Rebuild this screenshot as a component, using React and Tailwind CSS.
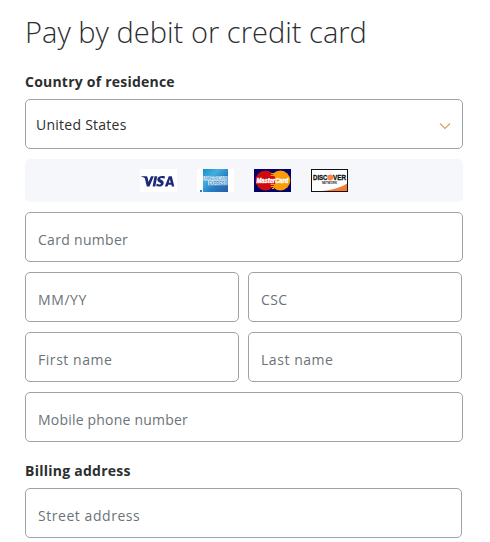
const inputBase =
  "h-[50px] w-full min-w-0 rounded-[5px] border border-[#9da3a6] bg-white px-3 pt-1 text-[14px] text-[#6c7378] placeholder:text-[#6c7378] placeholder:opacity-100 outline-none";

function Field({ label, className = "tracking-[0.4px]" }) {
  return (
    <input
      type="text"
      placeholder={label}
      aria-label={label}
      className={`${inputBase} ${className}`}
    />
  );
}

function Visa() {
  return (
    <svg width="37" height="23" viewBox="0 0 37 23">
      <rect width="37" height="23" fill="#fff" />
      <g fill="#1c2878">
        <path d="M1 7.200h5.200q1.100 0 1.300 1l1 4.800L11 7.200h2.800L9.500 17.500H6.800L4.900 9.300Q3.500 8 1 7.600z" />
        <path d="M14.500 7.200h2.700L15.300 17.500h-2.700z" />
        <path d="M25 7.400 24.600 9.600C22 8.600 20.200 8.800 20.200 9.800C20.200 10.900 24 11.200 23.700 14.200c-.3 3.200-4.300 3.900-7.500 2.900l.4-2.300c2.200 1 4.200.9 4.300 0 .200-1.300-3.800-1.500-3.600-4.500.2-3 4.400-3.900 7.700-2.900z" />
        <path fillRule="evenodd" d="M28.800 7.200h3L34.300 17.500h-2.500l-.3-1.700h-3.300l-.7 1.700h-2.700zm1.100 2.900-1.100 3.700h1.900z" />
      </g>
    </svg>
  );
}

function Amex() {
  return (
    <svg width="37" height="23" viewBox="0 0 37 23" fontFamily="Liberation Sans, sans-serif" fontWeight="700">
      <defs>
        <linearGradient id="amexBlue" x1="0" y1="0" x2="1" y2="1">
          <stop offset="0" stopColor="#168fcb" />
          <stop offset=".32" stopColor="#45aede" />
          <stop offset=".62" stopColor="#267dc2" />
          <stop offset="1" stopColor="#2a5da9" />
        </linearGradient>
      </defs>
      <rect width="37" height="23" fill="#fff" />
      <rect x="6" width="25" height="23" fill="url(#amexBlue)" />
      <rect x="6.500" y="7" width="24" height="4.500" fill="#fff" fillOpacity=".8" />
      <rect x="11" y="11.500" width="19.500" height="4.700" fill="#fff" fillOpacity=".8" />
      <text x="7" y="11" fontSize="4.600" textLength="23" lengthAdjust="spacingAndGlyphs" fill="#5fa8d6">AMERICAN</text>
      <text x="11.500" y="15.700" fontSize="4.600" textLength="18.500" lengthAdjust="spacingAndGlyphs" fill="#4f93cb">EXPRESS</text>
      <rect x="3" y="21" width="2" height="2" fill="#2384c6" />
    </svg>
  );
}

function MasterCard() {
  return (
    <svg width="37" height="23" viewBox="0 0 37 23" fontFamily="Liberation Sans, sans-serif" fontWeight="700" fontStyle="italic">
      <rect width="37" height="23" fill="#02026b" />
      <circle cx="26.300" cy="11.500" r="10" fill="#fb9b06" />
      <circle cx="11.500" cy="11.500" r="10" fill="#cf0a0e" />
      <path d="M17 4.500h4M16.500 6.500h5M16.500 15.500h5M17 17.500h4M18 19.500h2" stroke="#fb9b06" />
      <text x="2.400" y="13.700" fontSize="6.400" textLength="32" lengthAdjust="spacingAndGlyphs" fill="#fff" stroke="#fff" strokeWidth=".4">MasterCard</text>
    </svg>
  );
}

function Discover() {
  return (
    <svg width="37" height="23" viewBox="0 0 37 23" fontFamily="Liberation Sans, sans-serif" fontWeight="700">
      <rect x=".5" y=".5" width="36" height="22" fill="#fff" stroke="#111" />
      <path d="M36 14.500V22H11C23 20.800 31 18 36 14.500z" fill="#f47b35" />
      <text x="2" y="11" fontSize="7.400" textLength="14.500" lengthAdjust="spacingAndGlyphs" fill="#111" stroke="#111" strokeWidth=".3">DISC</text>
      <circle cx="19.300" cy="8.500" r="3" fill="#f58a45" />
      <text x="22" y="11" fontSize="7.400" textLength="13" lengthAdjust="spacingAndGlyphs" fill="#111" stroke="#111" strokeWidth=".3">VER</text>
      <text x="11" y="15.300" fontSize="3.200" textLength="15" lengthAdjust="spacingAndGlyphs" fill="#222">NETWORK</text>
    </svg>
  );
}

export default function App() {
  return (
    <main className="h-[542px] w-[490px] overflow-hidden bg-white pt-3 pl-[25px] font-['Open_Sans','Noto_Sans',sans-serif] text-[#2c2e2f]">
      <h1 className="h-10 whitespace-nowrap text-[29px] leading-10 font-light tracking-[0.03px]">
        Pay by debit or credit card
      </h1>
      <h2 className="mt-5 h-[27px] text-[14px] leading-5 font-bold tracking-[0.22px]">
        Country of residence
      </h2>
      <button
        type="button"
        className="flex h-[50px] w-[438px] items-center justify-between rounded-[5px] border border-[#9da3a6] pr-[11px] pl-2.5 text-[14px] tracking-[0.25px]"
      >
        <span>United States</span>
        <svg width="12" height="8" viewBox="0 0 12 8" fill="none" className="mt-1">
          <path d="M1 1.500 6 6.500 11 1.500" stroke="#d6a15d" strokeWidth="1.200" />
        </svg>
      </button>
      <div className="mt-2.5 flex h-[43px] w-[438px] items-center justify-center gap-5 rounded-[5px] bg-[#f5f7fb]">
        <Visa />
        <Amex />
        <MasterCard />
        <Discover />
      </div>
      <form className="mt-2.5 flex w-[438px] flex-col gap-2.5">
        <Field label="Card number" className="tracking-[0.3px]" />
        <div className="grid w-[437px] grid-cols-2 gap-[9px]">
          <Field label="MM/YY" className="tracking-[0.6px]" />
          <Field label="CSC" className="tracking-[0.4px]" />
        </div>
        <div className="grid w-[437px] grid-cols-2 gap-[9px]">
          <Field label="First name" className="tracking-[0.55px]" />
          <Field label="Last name" className="tracking-[0.55px]" />
        </div>
        <Field label="Mobile phone number" className="tracking-[0.2px]" />
      </form>
      <h2 className="mt-[19px] h-[27px] text-[14px] leading-5 font-bold tracking-[0.25px]">
        Billing address
      </h2>
      <div className="w-[437px]">
        <Field label="Street address" className="tracking-[0.55px]" />
      </div>
    </main>
  );
}
